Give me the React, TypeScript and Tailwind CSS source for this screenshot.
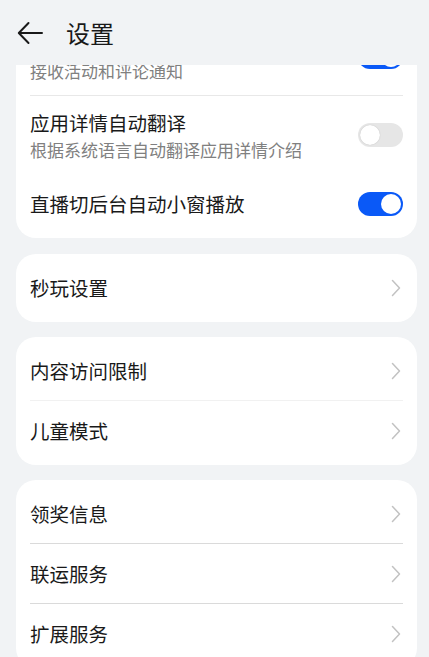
import { ReactNode } from "react";

const font = { fontFamily: '"Noto Sans CJK SC", "Noto Sans", sans-serif' };

const Toggle = ({ on }: { on: boolean }) => (
  <div
    className={`flex h-[24px] w-[45px] shrink-0 items-center rounded-full p-[2px] ${
      on ? "justify-end bg-[#0a59f7]" : "justify-start bg-[#e6e6e6]"
    }`}
  >
    <div
      className={`h-[20px] w-[20px] rounded-full bg-white ${
        on ? "" : "shadow-[0_0_1px_rgba(0,0,0,0.25)]"
      }`}
    />
  </div>
);

const Chevron = () => (
  <svg width="10" height="18" viewBox="0 0 10 18" className="mr-[2px] shrink-0">
    <path
      d="M1.5 1.5 L8.5 9 L1.5 16.5"
      fill="none"
      stroke="#c2c2c2"
      strokeWidth="1.5"
      strokeLinecap="round"
      strokeLinejoin="round"
    />
  </svg>
);

const Card = ({ children, className = "" }: { children: ReactNode; className?: string }) => (
  <div className={`ml-4 mr-[12px] rounded-[20px] bg-white px-[14px] py-[4px] ${className}`}>
    {children}
  </div>
);

// line: border colour under the row, included in the row height
const SwitchRow = ({
  title,
  sub,
  on,
  line = "",
}: {
  title: string;
  sub?: string;
  on: boolean;
  line?: string;
}) => (
  <div
    className={`flex items-center justify-between ${sub ? "h-[78px]" : "h-[60px]"} ${
      line ? `border-b ${line}` : ""
    }`}
  >
    <div className="flex flex-col gap-[3px]">
      <span className="text-[19.5px] leading-[26px] text-[#191919]">{title}</span>
      {sub && <span className="text-[17px] leading-[22px] text-[#808080]">{sub}</span>}
    </div>
    <Toggle on={on} />
  </div>
);

const LinkRow = ({ title, line = "" }: { title: string; line?: string }) => (
  <div
    className={`flex h-[60px] items-center justify-between ${line ? `border-b ${line}` : ""}`}
  >
    <span className="text-[19.5px] leading-[26px] text-[#191919]">{title}</span>
    <Chevron />
  </div>
);

export default function App() {
  return (
    <div className="flex h-[657px] w-[429px] flex-col overflow-hidden bg-[#f1f3f5]" style={font}>
      <div className="flex h-[65px] shrink-0 items-center">
        <svg width="26" height="24" viewBox="0 0 26 24" className="ml-[17px]">
          <path
            d="M25 12 H2.5 M11.5 2 L1.8 12 L11.5 22"
            fill="none"
            stroke="#191919"
            strokeWidth="2"
            strokeLinecap="round"
            strokeLinejoin="round"
          />
        </svg>
        <span className="ml-[23px] text-[24px] font-normal leading-[30px] text-[#191919]">
          设置
        </span>
      </div>

      <div className="flex-1 overflow-hidden">
        <div className="-mt-[51px] flex flex-col">
          <Card>
            <SwitchRow title="评论与互动消息" sub="接收活动和评论通知" on line="border-[#e8e8e8]" />
            <SwitchRow
              title="应用详情自动翻译"
              sub="根据系统语言自动翻译应用详情介绍"
              on={false}
            />
            <SwitchRow title="直播切后台自动小窗播放" on />
          </Card>

          <Card className="mt-[16px]">
            <LinkRow title="秒玩设置" />
          </Card>

          <Card className="mt-[15px]">
            <LinkRow title="内容访问限制" line="border-[#f1f1f1]" />
            <LinkRow title="儿童模式" />
          </Card>

          <Card className="mt-[15px]">
            <LinkRow title="领奖信息" line="border-[#dadada]" />
            <LinkRow title="联运服务" line="border-[#dadada]" />
            <LinkRow title="扩展服务" />
          </Card>
        </div>
      </div>
    </div>
  );
}
